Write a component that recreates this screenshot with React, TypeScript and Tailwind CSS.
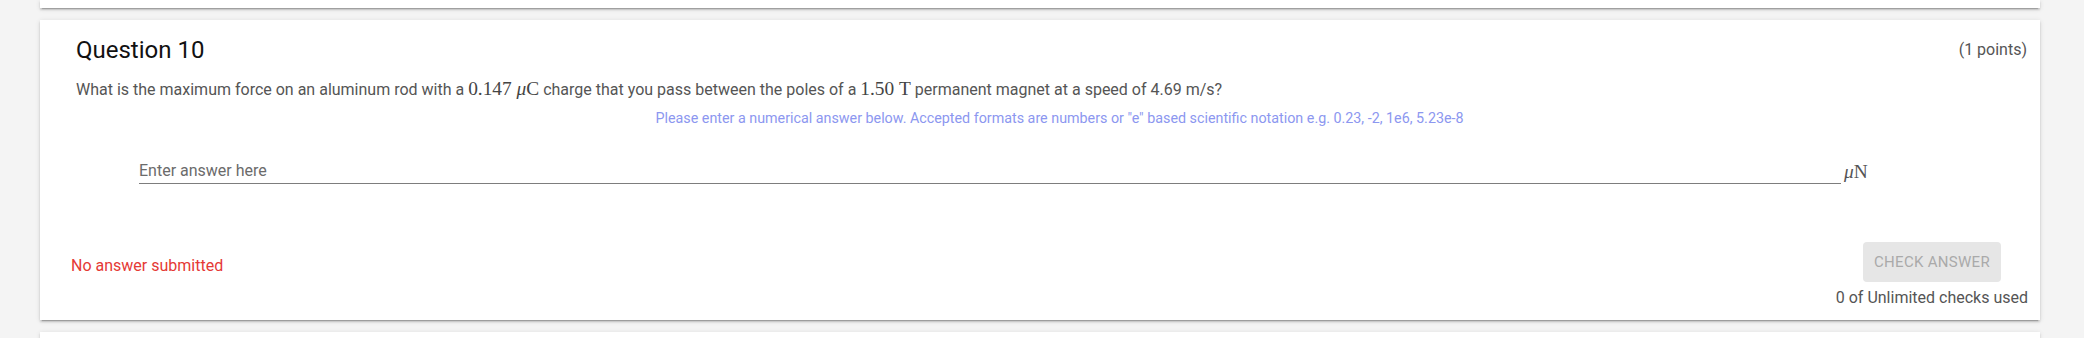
import React from "react";

const cardShadow =
  "shadow-[0_3px_1px_-2px_rgba(0,0,0,0.2),0_2px_2px_0_rgba(0,0,0,0.14),0_1px_5px_0_rgba(0,0,0,0.12)]";

function Tex({ children }: { children: React.ReactNode }) {
  return (
    <span className="font-['Liberation_Serif',serif] text-[1.21em] leading-none text-[#444]">
      {children}
    </span>
  );
}

function QuestionCard() {
  return (
    <div className={`ml-[40px] flex h-[300px] w-[2000px] shrink-0 flex-col bg-white ${cardShadow}`}>
      <div className="pl-[36px] pr-[13px] pt-[14px]">
        <div className="flex h-8 items-center justify-between">
          <h2 className="text-[24px] leading-8 text-[#111]">Question 10</h2>
          <span className="text-base leading-6 text-[#555]">(1 points)</span>
        </div>

        <p className="mt-3 h-6 text-base leading-6 text-[#555]">
          What is the maximum force on an aluminum rod with a{" "}
          <Tex>
            0.147&nbsp;<i>μ</i>C
          </Tex>{" "}
          charge that you pass between the poles of a{" "}
          <Tex>1.50&nbsp;T</Tex> permanent magnet at a speed of 4.69 m/s?
        </p>

        <p className="mt-[6px] pl-[16px] text-center text-[14.3px] leading-5 text-[#8c97f0]">
          Please enter a numerical answer below. Accepted formats are numbers or "e" based
          scientific notation e.g. 0.23, -2, 1e6, 5.23e-8
        </p>

        <div className="ml-[63px] mt-[31px] flex items-end">
          <div className="w-[1702px] border-b border-[#7d7d7d]">
            <span className="block text-base leading-6 text-[#6b6b6b]">Enter answer here</span>
          </div>
          <span className="mb-[3px] ml-[3px] font-['Liberation_Serif',serif] text-[19.4px] leading-none text-[#555]">
            <i>μ</i>N
          </span>
        </div>
      </div>

      <div className="mt-[58px] flex items-start justify-between pl-[31px] pr-[12px]">
        <span className="mt-3 text-base leading-6 text-[#e53935]">No answer submitted</span>
        <div className="flex flex-col items-end">
          <button
            disabled
            className="mr-[27px] h-10 w-[138px] rounded bg-[#e6e6e6] text-[15px] uppercase tracking-[0.02em] text-[#aaa]"
          >
            Check Answer
          </button>
          <span className="mt-1 text-base leading-6 text-[#555]">0 of Unlimited checks used</span>
        </div>
      </div>
    </div>
  );
}

export default function App() {
  return (
    <div className="flex h-[338px] flex-col gap-3 overflow-hidden bg-[#f4f4f4] font-['Roboto',sans-serif]">
      <div className={`ml-[40px] h-2 w-[2000px] shrink-0 bg-white ${cardShadow}`} />
      <QuestionCard />
      <div className={`ml-[40px] w-[2000px] flex-1 bg-white ${cardShadow}`} />
    </div>
  );
}
